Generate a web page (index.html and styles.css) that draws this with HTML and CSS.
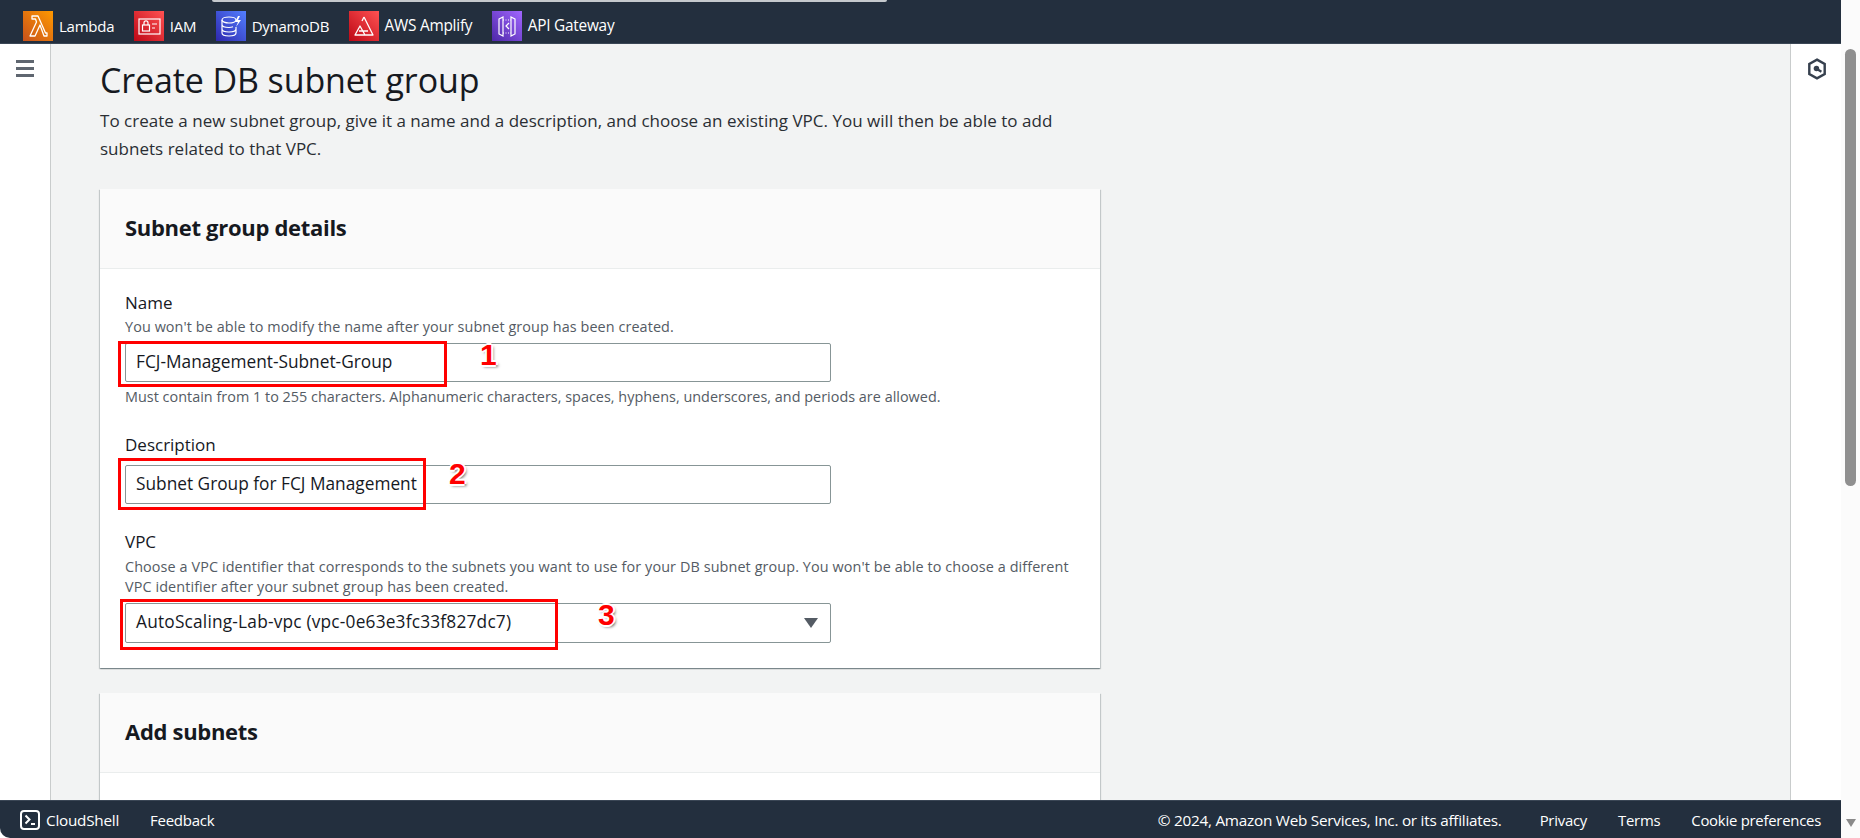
FILE: index.html
```html
<!DOCTYPE html>
<html lang="en">
<head>
<meta charset="utf-8">
<title>Create DB subnet group</title>
<link rel="stylesheet" href="styles.css">
</head>
<body>
<div class="page">
  <div class="app">
    <header class="topbar">
      <div class="search-edge"></div>
      <a class="svc svc-lambda"><span class="tile tile-orange"><svg viewBox="0 0 30 30"><path d="M7 25h5l5-11 4 11h3v-3h-1.500L15 5H9v3h3.500l1 3L7 25z" fill="none" stroke="#fff" stroke-width="1.300" stroke-linejoin="round"/></svg></span>Lambda</a>
      <a class="svc svc-iam"><span class="tile tile-red"><svg viewBox="0 0 30 30"><rect x="5" y="8" width="21" height="15" fill="none" stroke="#fff" stroke-width="1.200"/><rect x="8.500" y="14" width="7" height="6" fill="none" stroke="#fff" stroke-width="1.200"/><path d="M10 14v-2.200a2 2 0 0 1 4 0V14M18 13h5M18 17h3" fill="none" stroke="#fff" stroke-width="1.200"/></svg></span>IAM</a>
      <a class="svc svc-ddb"><span class="tile tile-blue"><svg viewBox="0 0 30 30"><ellipse cx="13" cy="9" rx="7" ry="3" fill="none" stroke="#fff" stroke-width="1.200"/><path d="M6 9v13c0 1.700 3 3 7 3s7-1.300 7-3v-6M6 13.500c0 1.700 3 3 7 3 2 0 3-.3 4-.7M6 18c0 1.700 3 3 7 3s7-1.300 7-3" fill="none" stroke="#fff" stroke-width="1.200"/><path d="M22 5l-3 6h3l-2 5 5-7h-3l2-4z" fill="#fff"/></svg></span>DynamoDB</a>
      <a class="svc svc-amp"><span class="tile tile-red"><svg viewBox="0 0 30 30"><path d="M15 6l9 18H6l5-9 5 9M15 6l-2 4M10 20h9" fill="none" stroke="#fff" stroke-width="1.300" stroke-linejoin="round"/></svg></span>AWS Amplify</a>
      <a class="svc svc-api"><span class="tile tile-purple"><svg viewBox="0 0 30 30"><path d="M7 8l4-2v19l-4-2zM23 8l-4-2v19l4-2z" fill="none" stroke="#fff" stroke-width="1.200"/><path d="M17 12l-3 3 3 3" fill="none" stroke="#fff" stroke-width="1.200"/><path d="M11 9h8M11 22h8" fill="none" stroke="#fff" stroke-width="1" stroke-dasharray="1 1.500"/></svg></span>API Gateway</a>
    </header>
    <div class="middle">
      <aside class="side">
        <span class="burger"></span>
        <span class="burger"></span>
        <span class="burger"></span>
      </aside>
      <main class="main">
        <h1 class="title">Create DB subnet group</h1>
        <p class="lead">To create a new subnet group, give it a name and a description, and choose an existing VPC. You will then be able to add subnets related to that VPC.</p>
        <section class="card">
          <h2 class="card-head">Subnet group details</h2>
          <div class="card-body">
            <div class="field">
              <div class="label">Name</div>
              <div class="hint">You won't be able to modify the name after your subnet group has been created.</div>
              <div class="box">FCJ-Management-Subnet-Group
                <span class="mark mark-1"></span><span class="num num-1">1</span>
              </div>
              <div class="hint hint-after">Must contain from 1 to 255 characters. Alphanumeric characters, spaces, hyphens, underscores, and periods are allowed.</div>
            </div>
            <div class="field field-desc">
              <div class="label">Description</div>
              <div class="box box-desc">Subnet Group for FCJ Management
                <span class="mark mark-2"></span><span class="num num-2">2</span>
              </div>
            </div>
            <div class="field field-vpc">
              <div class="label">VPC</div>
              <div class="hint hint-vpc">Choose a VPC identifier that corresponds to the subnets you want to use for your DB subnet group. You won't be able to choose a different VPC identifier after your subnet group has been created.</div>
              <div class="box box-select">AutoScaling-Lab-vpc (vpc-0e63e3fc33f827dc7)
                <span class="caret"></span>
                <span class="mark mark-3"></span><span class="num num-3">3</span>
              </div>
            </div>
          </div>
        </section>
        <section class="card card-second">
          <h2 class="card-head">Add subnets</h2>
          <div class="card-body"></div>
        </section>
      </main>
      <aside class="rail">
        <svg class="rail-icon" viewBox="0 0 18 20"><path d="M9 1.500l7 4v9l-7 4-7-4v-9z" fill="none" stroke="#36404e" stroke-width="2.200"/><circle cx="8.500" cy="9.500" r="2.500" fill="#36404e"/><path d="M9 10l4 2.500" stroke="#36404e" stroke-width="2"/></svg>
      </aside>
    </div>
    <footer class="footer">
      <a class="foot-shell"><svg class="shell-icon" viewBox="0 0 20 20"><rect x="1" y="1" width="18" height="18" rx="3" fill="none" stroke="#fff" stroke-width="2"/><path d="M5.500 5.500l4 4-4 4" fill="none" stroke="#fff" stroke-width="2"/><path d="M11 14h4" stroke="#fff" stroke-width="2"/></svg>CloudShell</a>
      <a class="foot-feedback">Feedback</a>
      <span class="foot-copy">© 2024, Amazon Web Services, Inc. or its affiliates.</span>
      <a class="foot-link">Privacy</a>
      <a class="foot-link">Terms</a>
      <a class="foot-link foot-last">Cookie preferences</a>
    </footer>
  </div>
  <div class="scrollbar">
    <div class="thumb"></div>
    <div class="arrow"></div>
  </div>
</div>
</body>
</html>
```
FILE: styles.css
```css
* { box-sizing: border-box; }
html, body { margin: 0; height: 100%; overflow: hidden; }
body { font-family: "Open Sans", "Noto Sans", sans-serif; color: #16191f; background: #fff; }
a { color: inherit; text-decoration: none; }

.page { display: flex; width: 1860px; height: 838px; }
.app { width: 1841px; height: 838px; display: flex; flex-direction: column; }

.topbar { height: 44px; flex: none; background: #232f3e; border-bottom: 1px solid #3a4655; display: flex; align-items: center; padding: 8px 0 0 23px; color: #fff; font-size: 15px; position: relative; letter-spacing: -.25px; }
.search-edge { position: absolute; left: 212px; top: 0; width: 675px; height: 2px; background: #c5c9cd; border-radius: 0 0 3px 3px; }
.svc { display: flex; align-items: center; gap: 6px; margin-right: 19.500px; }
.svc-amp, .svc-api { font-size: 15.400px; }
.tile { width: 30px; height: 30px; display: block; flex: none; }
.tile svg { display: block; width: 30px; height: 30px; }
.tile-orange { background: linear-gradient(45deg, #c8511b, #ff9900); }
.tile-red { background: linear-gradient(45deg, #bd0816, #ff5252); }
.tile-blue { background: linear-gradient(45deg, #2e27ad, #527fff); }
.tile-purple { background: linear-gradient(45deg, #4d27a8, #a166ff); }

.middle { flex: 1; min-height: 0; display: flex; }
.side { width: 51px; flex: none; background: #fff; border-right: 1px solid #c9cccc; padding: 16px 0 0 16px; display: flex; flex-direction: column; gap: 4px; }
.burger { width: 18px; height: 3px; background: #5f6670; }
.main { flex: 1; min-width: 0; overflow: hidden; background: #f2f3f3; padding: 0 0 0 49px; }
.rail { width: 51px; flex: none; background: #fff; border-left: 1px solid #c9cccc; padding: 14px 0 0 16px; }
.rail-icon { display: block; width: 20px; height: 22px; }

.title { margin: 12px 0 0; font-size: 34px; line-height: 48px; font-weight: 400; color: #16191f; letter-spacing: -.12px; }
.lead { margin: 3px 0 0; width: 970px; font-size: 17px; line-height: 28px; color: #2a2e33; letter-spacing: .02px; }

.card { width: 1000px; background: #fff; box-shadow: 0 1px 1px rgba(0, 28, 36, .3), 1px 1px 1px rgba(0, 28, 36, .15), -1px 1px 1px rgba(0, 28, 36, .15); margin-top: 26px; }
.card-second { margin-top: 25px; }
.card-head { margin: 0; height: 80px; padding: 0 25px 4px; display: flex; align-items: center; font-size: 22px; font-weight: 700; letter-spacing: -.3px; background: #fafafa; border-bottom: 1px solid #eaeded; }
.card-body { padding: 22px 25px 25px; }

.label { font-size: 17px; line-height: 24px; color: #16191f; }
.hint { font-size: 14.400px; line-height: 20px; color: #545b64; width: 950px; margin-top: 2px; letter-spacing: .09px; }
.hint-after { margin-top: 5px; letter-spacing: .02px; }
.hint-vpc { margin-top: 3px; letter-spacing: .1px; }
.box { position: relative; width: 706px; height: 39px; margin-top: 6px; padding-left: 10px; border: 1px solid #879596; border-radius: 2px; background: #fff; font-size: 17.300px; line-height: 36px; color: #16191f; }
.field-desc { margin-top: 26px; }
.box-desc { margin-top: 8px; }
.field-vpc { margin-top: 26px; }
.box-select { height: 40px; letter-spacing: .2px; }

.caret { position: absolute; right: 12px; top: 14px; width: 0; height: 0; border-left: 7px solid transparent; border-right: 7px solid transparent; border-top: 10px solid #545b64; }
.mark { position: absolute; border: 3px solid #f00; pointer-events: none; }
.mark-1 { left: -8px; top: -3px; width: 329px; height: 46px; }
.mark-2 { left: -8px; top: -8px; width: 308px; height: 52px; }
.mark-3 { left: -6px; top: -5px; width: 438px; height: 51px; }
.num { position: absolute; font-family: "Liberation Sans", Arial, sans-serif; font-weight: 700; font-size: 30px; line-height: 30px; color: #f00; letter-spacing: 0; text-shadow: -2px 0 #fff, 2px 0 #fff, 0 -2px #fff, 0 2px #fff, -1px -1px #fff, 1px -1px #fff, -1px 1px #fff, 2px 2px 3px rgba(0, 0, 0, .6); }
.num-1 { left: 354px; top: -4px; }
.num-2 { left: 323px; top: -7px; }
.num-3 { left: 472px; top: -4px; }

.scrollbar { width: 19px; height: 838px; background: #fbfbfb; position: relative; }
.thumb { position: absolute; left: 4px; top: 49px; width: 11px; height: 437px; background: #8f8f8f; border-radius: 6px; }
.arrow { position: absolute; left: 5px; top: 819px; width: 0; height: 0; border-left: 5px solid transparent; border-right: 5px solid transparent; border-top: 8px solid #8a8a8a; }

.footer { height: 38px; flex: none; background: #232f3e; color: #fff; border-top: 1px solid #3a4655; border-bottom-left-radius: 10px; display: flex; align-items: center; font-size: 15.300px; padding-left: 20px; letter-spacing: -.25px; }
.foot-shell { display: flex; align-items: center; gap: 6px; }
.shell-icon { width: 20px; height: 20px; display: block; }
.foot-feedback { margin-left: 31px; font-size: 15px; }
.foot-copy { margin-left: auto; }
.foot-link { margin-left: 38px; font-size: 14.900px; }
.foot-link + .foot-link { margin-left: 31px; }
.foot-last { margin-right: 20px; }
```
